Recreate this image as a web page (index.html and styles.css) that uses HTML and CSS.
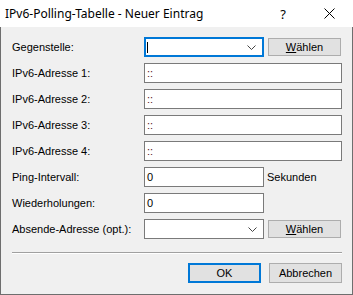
FILE: index.html
```html
<!DOCTYPE html>
<html lang="de">
<head>
    <meta charset="UTF-8">
    <title>IPv6-Polling-Tabelle - Neuer Eintrag</title>
    <link rel="stylesheet" href="styles.css">
</head>
<body>
    <div class="dialog">
        <!-- Title bar -->
        <div class="titlebar">
            <span class="title">IPv6-Polling-Tabelle - Neuer Eintrag</span>
            <span class="help">?</span>
            <span class="close">
                <svg width="11" height="11" viewBox="0 0 11 11">
                    <path d="M0.5 0.5 L10.5 10.5 M10.5 0.5 L0.5 10.5" stroke="#000" stroke-width="1" fill="none"/>
                </svg>
            </span>
        </div>

        <!-- Dialog body -->
        <div class="content">
            <div class="form">
                <label>Gegenstelle:</label>
                <div class="combo focused">
                    <span class="caret"></span>
                    <svg class="chevron" width="9" height="5" viewBox="0 0 9 5">
                        <path d="M0.5 0.5 L4.5 4.5 L8.5 0.5" stroke="#444" stroke-width="1" fill="none"/>
                    </svg>
                </div>
                <div class="cell"><button class="btn small"><u>W</u>ählen</button></div>

                <label>IPv6-Adresse 1:</label>
                <div class="field wide colon">::</div>

                <label>IPv6-Adresse 2:</label>
                <div class="field wide colon">::</div>

                <label>IPv6-Adresse 3:</label>
                <div class="field wide colon">::</div>

                <label>IPv6-Adresse 4:</label>
                <div class="field wide colon">::</div>

                <label>Ping-Intervall:</label>
                <div class="field">0</div>
                <div class="cell unit">Sekunden</div>

                <label>Wiederholungen:</label>
                <div class="field">0</div>
                <div class="cell"></div>

                <label>Absende-Adresse (opt.):</label>
                <div class="combo">
                    <svg class="chevron" width="9" height="5" viewBox="0 0 9 5">
                        <path d="M0.5 0.5 L4.5 4.5 L8.5 0.5" stroke="#444" stroke-width="1" fill="none"/>
                    </svg>
                </div>
                <div class="cell"><button class="btn small"><u>W</u>ählen</button></div>
            </div>

            <div class="separator"></div>

            <div class="actions">
                <button class="btn default">OK</button>
                <button class="btn">Abbrechen</button>
            </div>
        </div>
    </div>
</body>
</html>
```

FILE: styles.css
```css
* {
    box-sizing: border-box;
}
body {
    margin: 0;
    background: #f0f0f0;
    font-family: "Liberation Sans", Arial, sans-serif;
    font-size: 11px;
    color: #000;
}
.dialog {
    width: 353px;
    height: 295px;
    display: flex;
    flex-direction: column;
}
.titlebar {
    height: 27px;
    background: #fff;
    display: flex;
    align-items: center;
    padding-left: 5px;
}
.title {
    font-family: "Noto Sans", sans-serif;
    font-size: 12px;
    flex: 1;
}
.help {
    font-family: "Noto Sans", sans-serif;
    font-size: 13px;
    width: 46px;
    text-align: center;
}
.close {
    width: 46px;
    display: flex;
    justify-content: center;
    margin-right: 1px;
}
.content {
    flex: 1;
    background: #f0f0f0;
    border: 1px solid #6e6e6e;
    border-top: none;
    padding: 10px 10px 0 11px;
}
.form {
    display: grid;
    grid-template-columns: 132px 120px 78px;
    grid-auto-rows: 20px;
    row-gap: 6px;
}
.form label {
    display: flex;
    align-items: center;
}
.field,
.combo {
    background: #fff;
    border: 1px solid #7a7a7a;
    display: flex;
    align-items: center;
    padding-left: 2px;
}
.field.wide {
    grid-column: 2 / 4;
}
.colon {
    color: #5a2020;
}
.combo {
    position: relative;
    justify-content: flex-end;
    padding-right: 6px;
}
.combo.focused {
    border: 2px solid #0078d7;
}
.caret {
    position: absolute;
    left: 1px;
    top: 3px;
    width: 1px;
    height: 11px;
    background: #000;
}
.cell {
    display: flex;
    align-items: center;
    padding-left: 4px;
}
.unit {
    padding-left: 3px;
}
.btn {
    font-family: "Liberation Sans", Arial, sans-serif;
    font-size: 11px;
    color: #000;
    background: #e1e1e1;
    border: 1px solid #adadad;
    width: 73px;
    height: 20px;
    padding: 0;
    margin: 0;
}
.btn.small {
    height: 18px;
}
.btn.default {
    border: 2px solid #0078d7;
}
.separator {
    margin-top: 13px;
    height: 2px;
    border-top: 1px solid #a0a0a0;
    border-bottom: 1px solid #fff;
}
.actions {
    margin-top: 9px;
    display: flex;
    justify-content: flex-end;
    gap: 8px;
}
```
